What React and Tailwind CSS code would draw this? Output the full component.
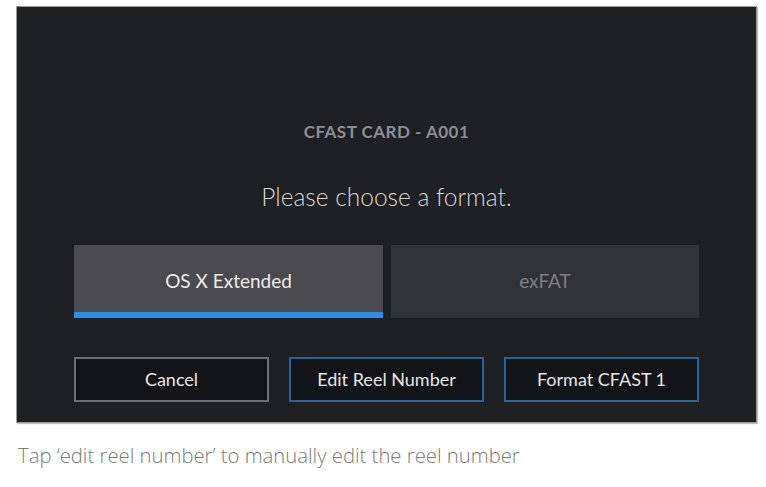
export default function App() {
  return (
    <div className="w-[766px] h-[487px] bg-white font-['Lato',sans-serif]">
      <div className="pt-[6px] pl-[16px]">
        <div className="w-[741px] h-[417px] bg-[#1f2023] border border-[#9a9a9a] shadow-[1px_1px_1px_rgba(0,0,0,0.25)] flex flex-col items-center">
          <div className="mt-[115px] text-[17px] font-bold tracking-[0.5px] text-[#8e8f92] leading-[20px]">
            CFAST CARD - A001
          </div>
          <div className="mt-[40px] text-[24.5px] font-light text-[#d6d6d8] leading-[30px]">
            Please choose a format.
          </div>
          <div className="mt-[33px] flex gap-[8px]">
            <div className="w-[309px] h-[73px] bg-[#4a4a4f] flex flex-col">
              <div className="flex-1 pt-[6px] flex items-center justify-center text-[19px] text-[#ececec]">OS X Extended</div>
              <div className="h-[6px] bg-[#2f8ce8]" />
            </div>
            <div className="w-[308px] h-[73px] bg-[#323338] flex items-center justify-center text-[19px] text-[#7e7f83]">
              exFAT
            </div>
          </div>
          <div className="mt-[39px] flex gap-[20px]">
            <div className="w-[195px] h-[45px] bg-[#131418] border-2 border-[#6f7073] flex items-center justify-center text-[18px] text-[#e6e6e6]">
              Cancel
            </div>
            <div className="w-[195px] h-[45px] bg-[#131418] border-2 border-[#2c639c] flex items-center justify-center text-[18px] text-[#e6e6e6]">
              Edit Reel Number
            </div>
            <div className="w-[195px] h-[45px] bg-[#131418] border-2 border-[#2c639c] flex items-center justify-center text-[18px] text-[#e6e6e6]">
              Format CFAST 1
            </div>
          </div>
        </div>
      </div>
      <p className="mt-[20px] ml-[18px] font-['Open_Sans',sans-serif] text-[20.3px] font-light text-[#7a7a7a] leading-[24px]">
        Tap ‘edit reel number’ to manually edit the reel number
      </p>
    </div>
  )
}
